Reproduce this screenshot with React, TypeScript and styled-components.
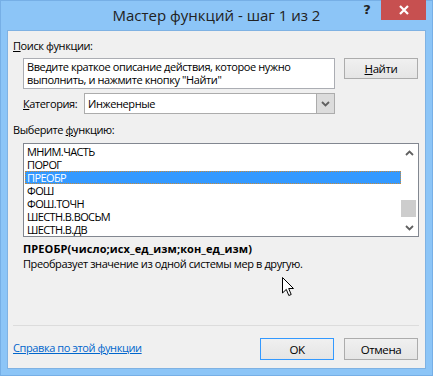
import React from "react";
import styled, { createGlobalStyle } from "styled-components";

const GlobalStyle = createGlobalStyle`
  html, body {
    margin: 0;
    padding: 0;
    background: #8cc5f7;
  }
  body {
    font-family: "Open Sans", "Noto Sans", sans-serif;
    color: #000;
  }
`;

const functions = [
  "МНИМ.ЧАСТЬ",
  "ПОРОГ",
  "ПРЕОБР",
  "ФОШ",
  "ФОШ.ТОЧН",
  "ШЕСТН.В.ВОСЬМ",
  "ШЕСТН.В.ДВ",
];

const Window = styled.div`
  position: relative;
  width: 433px;
  height: 376px;
  box-sizing: border-box;
  background: #8cc5f7;
  border: 1px solid #76afe6;
  display: flex;
  flex-direction: column;
`;

const TitleBar = styled.div`
  height: 29px;
  display: grid;
  grid-template-columns: 1fr auto 1fr;
  align-items: start;
`;

const Title = styled.div`
  grid-column: 2;
  font-size: 15px;
  line-height: 29px;
  color: #222;
  white-space: nowrap;
`;

const Controls = styled.div`
  grid-column: 3;
  justify-self: end;
  display: flex;
  align-items: flex-start;
  margin-right: 6px;
`;

const HelpButton = styled.div`
  width: 26px;
  height: 20px;
  font-family: "DejaVu Sans", sans-serif;
  font-weight: bold;
  font-size: 13px;
  line-height: 20px;
  text-align: center;
  color: #222;
  margin-top: -1px;
  margin-right: 1px;
`;

const CloseButton = styled.div`
  width: 45px;
  height: 20px;
  margin-top: -1px;
  background: #c75050;
  display: flex;
  align-items: center;
  justify-content: center;
`;

const Client = styled.div`
  flex: 1;
  margin: 0 6px 6px 6px;
  border: 1px solid #7fb2e3;
  background: #f0f0f0;
  display: flex;
  flex-direction: column;
  font-size: 11px;
  line-height: 15px;
  letter-spacing: -0.4px;
`;

const Label = styled.div<{ $top?: number }>`
  margin-top: ${(p) => p.$top ?? 0}px;
  padding-left: 5px;
  white-space: nowrap;
`;

const Key = styled.span`
  text-decoration: underline;
`;

const SearchRow = styled.div`
  display: flex;
  align-items: flex-start;
  margin: 5px 0 0 15px;
`;

const SearchBox = styled.div`
  width: 312px;
  height: 31px;
  box-sizing: border-box;
  background: #fff;
  border: 1px solid #abadb3;
  padding: 2px 3px;
  line-height: 12.5px;
`;

const Button = styled.div<{ $focused?: boolean }>`
  width: 74px;
  height: 22px;
  box-sizing: border-box;
  border: 1px solid ${(p) => (p.$focused ? "#3399ff" : "#acacac")};
  background: linear-gradient(#f0f0f0, #e5e5e5);
  display: flex;
  align-items: center;
  justify-content: center;
  font-size: 11.5px;
`;

const FindButton = styled(Button)`
  margin-left: 9px;
  height: 21px;
`;

const CategoryRow = styled.div`
  display: flex;
  align-items: center;
  margin: 4px 0 0 15px;
`;

const CategoryLabel = styled.div`
  width: 61px;
  white-space: nowrap;
`;

const Select = styled.div`
  width: 251px;
  height: 21px;
  box-sizing: border-box;
  border: 1px solid #acacac;
  background: #fff;
  display: flex;
  align-items: stretch;
`;

const SelectValue = styled.div`
  flex: 1;
  padding-left: 3px;
  line-height: 19px;
`;

const DropButton = styled.div`
  width: 17px;
  background: #dcdcdc;
  border-left: 1px solid #acacac;
  display: flex;
  align-items: center;
  justify-content: center;
`;

const ListBox = styled.div`
  margin: 6px 6px 0 15px;
  height: 94px;
  box-sizing: border-box;
  border: 1px solid #828790;
  background: #fff;
  display: flex;
`;

const Items = styled.div`
  flex: 1;
  padding: 1px 0 0 1px;
`;

const Item = styled.div<{ $selected?: boolean }>`
  height: 13px;
  line-height: 13px;
  padding-left: 2px;
  box-sizing: border-box;
  letter-spacing: -0.6px;
  background: ${(p) => (p.$selected ? "#3399ff" : "transparent")};
  color: ${(p) => (p.$selected ? "#fff" : "#000")};
  outline: ${(p) => (p.$selected ? "1px dotted #c78a3a" : "none")};
  outline-offset: -1px;
`;

const ScrollBar = styled.div`
  width: 17px;
  display: flex;
  flex-direction: column;
  background: #fff;
`;

const ScrollArrow = styled.div`
  height: 17px;
  display: flex;
  align-items: center;
  justify-content: center;
`;

const ScrollTrack = styled.div`
  flex: 1;
  display: flex;
  flex-direction: column;
  justify-content: flex-end;
  padding-bottom: 2px;
`;

const Thumb = styled.div`
  width: 15px;
  height: 17px;
  background: #cdcdcd;
`;

const Syntax = styled.div`
  margin: 4px 0 0 15px;
  font-weight: bold;
  letter-spacing: 0.1px;
  white-space: nowrap;
`;

const Description = styled.div`
  margin-left: 15px;
  white-space: nowrap;
`;

const Spacer = styled.div`
  flex: 1;
`;

const Separator = styled.div`
  height: 1px;
  margin: 0 6px 0 5px;
  background: #dcdcdc;
`;

const Footer = styled.div`
  display: flex;
  align-items: center;
  margin: 12px 7px 8px 5px;
  gap: 10px;
`;

const HelpLink = styled.a`
  flex: 1;
  color: #0066cc;
  text-decoration: underline;
  white-space: nowrap;
  margin-top: -4px;
`;

const Cursor = styled.svg`
  position: absolute;
  left: 281px;
  top: 276px;
`;

const Chevron = ({ up }: { up?: boolean }) => (
  <svg width="9" height="6" viewBox="0 0 9 6">
    <path
      d={up ? "M1 5 L4.5 1.5 L8 5" : "M1 1 L4.5 4.5 L8 1"}
      fill="none"
      stroke="#606060"
      strokeWidth="1.8"
    />
  </svg>
);

export default function App() {
  return (
    <>
      <GlobalStyle />
      <Window>
        <TitleBar>
          <Title>Мастер функций - шаг 1 из 2</Title>
          <Controls>
            <HelpButton>?</HelpButton>
            <CloseButton>
              <svg width="10" height="10" viewBox="0 0 10 10">
                <path d="M1 1 L9 9 M9 1 L1 9" stroke="#fff" strokeWidth="2.2" />
              </svg>
            </CloseButton>
          </Controls>
        </TitleBar>
        <Client>
          <Label $top={7}>
            <Key>П</Key>оиск функции:
          </Label>
          <SearchRow>
            <SearchBox>
              Введите краткое описание действия, которое нужно
              <br />
              выполнить, и нажмите кнопку "Найти"
            </SearchBox>
            <FindButton>
              <span>
                <Key>Н</Key>айти
              </span>
            </FindButton>
          </SearchRow>
          <CategoryRow>
            <CategoryLabel>
              <Key>К</Key>атегория:
            </CategoryLabel>
            <Select>
              <SelectValue>Инженерные</SelectValue>
              <DropButton>
                <Chevron />
              </DropButton>
            </Select>
          </CategoryRow>
          <Label $top={8}>
            Выберите <Key>ф</Key>ункцию:
          </Label>
          <ListBox>
            <Items>
              {functions.map((name) => (
                <Item key={name} $selected={name === "ПРЕОБР"}>
                  {name}
                </Item>
              ))}
            </Items>
            <ScrollBar>
              <ScrollArrow>
                <Chevron up />
              </ScrollArrow>
              <ScrollTrack>
                <Thumb />
              </ScrollTrack>
              <ScrollArrow>
                <Chevron />
              </ScrollArrow>
            </ScrollBar>
          </ListBox>
          <Syntax>ПРЕОБР(число;исх_ед_изм;кон_ед_изм)</Syntax>
          <Description>
            Преобразует значение из одной системы мер в другую.
          </Description>
          <Spacer />
          <Separator />
          <Footer>
            <HelpLink>Справка по этой функции</HelpLink>
            <Button $focused>OK</Button>
            <Button>Отмена</Button>
          </Footer>
        </Client>
        <Cursor width="13" height="20" viewBox="0 0 13 20">
          <path
            d="M0.5 0.5 L0.5 16 L4.3 12.4 L6.8 18.5 L9.2 17.5 L6.7 11.5 L11.5 11.5 Z"
            fill="#fff"
            stroke="#000"
            strokeWidth="1"
          />
        </Cursor>
      </Window>
    </>
  );
}
